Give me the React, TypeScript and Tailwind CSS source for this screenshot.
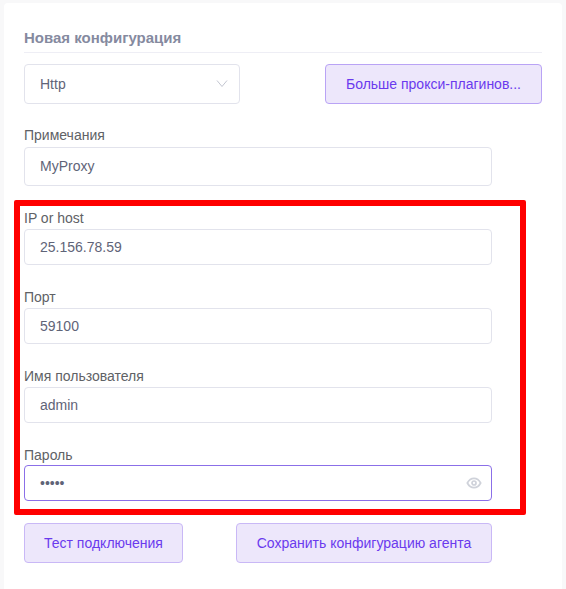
import React from "react";

function Field({ label, value, h, lh, mb, focus, children }: { label: string; value: string; h: string; lh: string; mb: string; focus?: boolean; children?: React.ReactNode }) {
  return (
    <div className={mb}>
      <div className={`${lh} text-[14px] leading-[17px] text-[#606266]`}>{label}</div>
      <div className={`w-[468px] ${h} flex items-center justify-between pl-[15px] pr-[9px] rounded-[4px] bg-white border ${focus ? "border-[#8b6fe8]" : "border-[#e2e3ec]"} text-[14px] text-[#5f6478]`}>
        <span>{value}</span>
        {children}
      </div>
    </div>
  );
}

export default function App() {
  return (
    <div className="relative w-[566px] h-[589px] overflow-hidden bg-[#f8f8f9] [font-family:'Liberation_Sans',Arial,sans-serif]">
      <div className="ml-[4px] mt-[3px] w-[558px] h-[586px] rounded-t-[4px] bg-white pl-[20px] pr-[20px] pt-[26px]">
        <div className="h-[24px] border-b border-[#eeeef5] text-[15px] font-bold leading-[17px] text-[#858a9f]">Новая конфигурация</div>
        <div className="mt-[11px] flex justify-between">
          <div className="w-[216px] h-[40px] flex items-center justify-between pl-[15px] pr-[11px] rounded-[4px] border border-[#e2e3ec] text-[14px] text-[#5f6478]">
            <span>Http</span>
            <svg width="12" height="12" viewBox="0 0 12 12" fill="none" stroke="#c3c6d1" strokeWidth="1"><path d="M1 2.5 6 8.5 11 2.5" /></svg>
          </div>
          <div className="w-[217px] h-[40px] flex items-center justify-center rounded-[4px] border border-[#b9a3f5] bg-[#ede7fb] text-[14px] text-[#6a3aee]">Больше прокси-плагинов...</div>
        </div>
        <div className="mt-[23px]">
          <Field label="Примечания" value="MyProxy" lh="h-[20px]" h="h-[39px]" mb="mb-[24px]" />
          <Field label="IP or host" value="25.156.78.59" lh="h-[19px]" h="h-[36px]" mb="mb-[24px]" />
          <Field label="Порт" value="59100" lh="h-[19px]" h="h-[36px]" mb="mb-[24px]" />
          <Field label="Имя пользователя" value="admin" lh="h-[19px]" h="h-[36px]" mb="mb-[24px]" />
          <Field label="Пароль" value="•••••" lh="h-[18px]" h="h-[36px]" mb="mb-[22px]" focus>
            <svg width="16" height="16" viewBox="0 0 24 24" fill="none" stroke="#cfd2da" strokeWidth="2.6" strokeLinecap="round" strokeLinejoin="round"><path d="M2 12s3.6-7 10-7 10 7 10 7-3.6 7-10 7-10-7-10-7Z" /><circle cx="12" cy="12" r="3" /></svg>
          </Field>
        </div>
        <div className="flex w-[518px]">
          <div className="w-[159px] h-[40px] flex items-center justify-center rounded-[4px] border border-[#c9b8f6] bg-[#ede7fb] text-[14px] text-[#6a3aee]">Тест подключения</div>
          <div className="ml-[53px] w-[256px] h-[40px] flex items-center justify-center rounded-[4px] border border-[#c9b8f6] bg-[#ede7fb] text-[14px] text-[#6a3aee]">Сохранить конфигурацию агента</div>
        </div>
      </div>
      <div className="absolute left-[14px] top-[200px] w-[512px] h-[315px] rounded-[2px] border-[6px] border-[#ff0000]" />
    </div>
  );
}
